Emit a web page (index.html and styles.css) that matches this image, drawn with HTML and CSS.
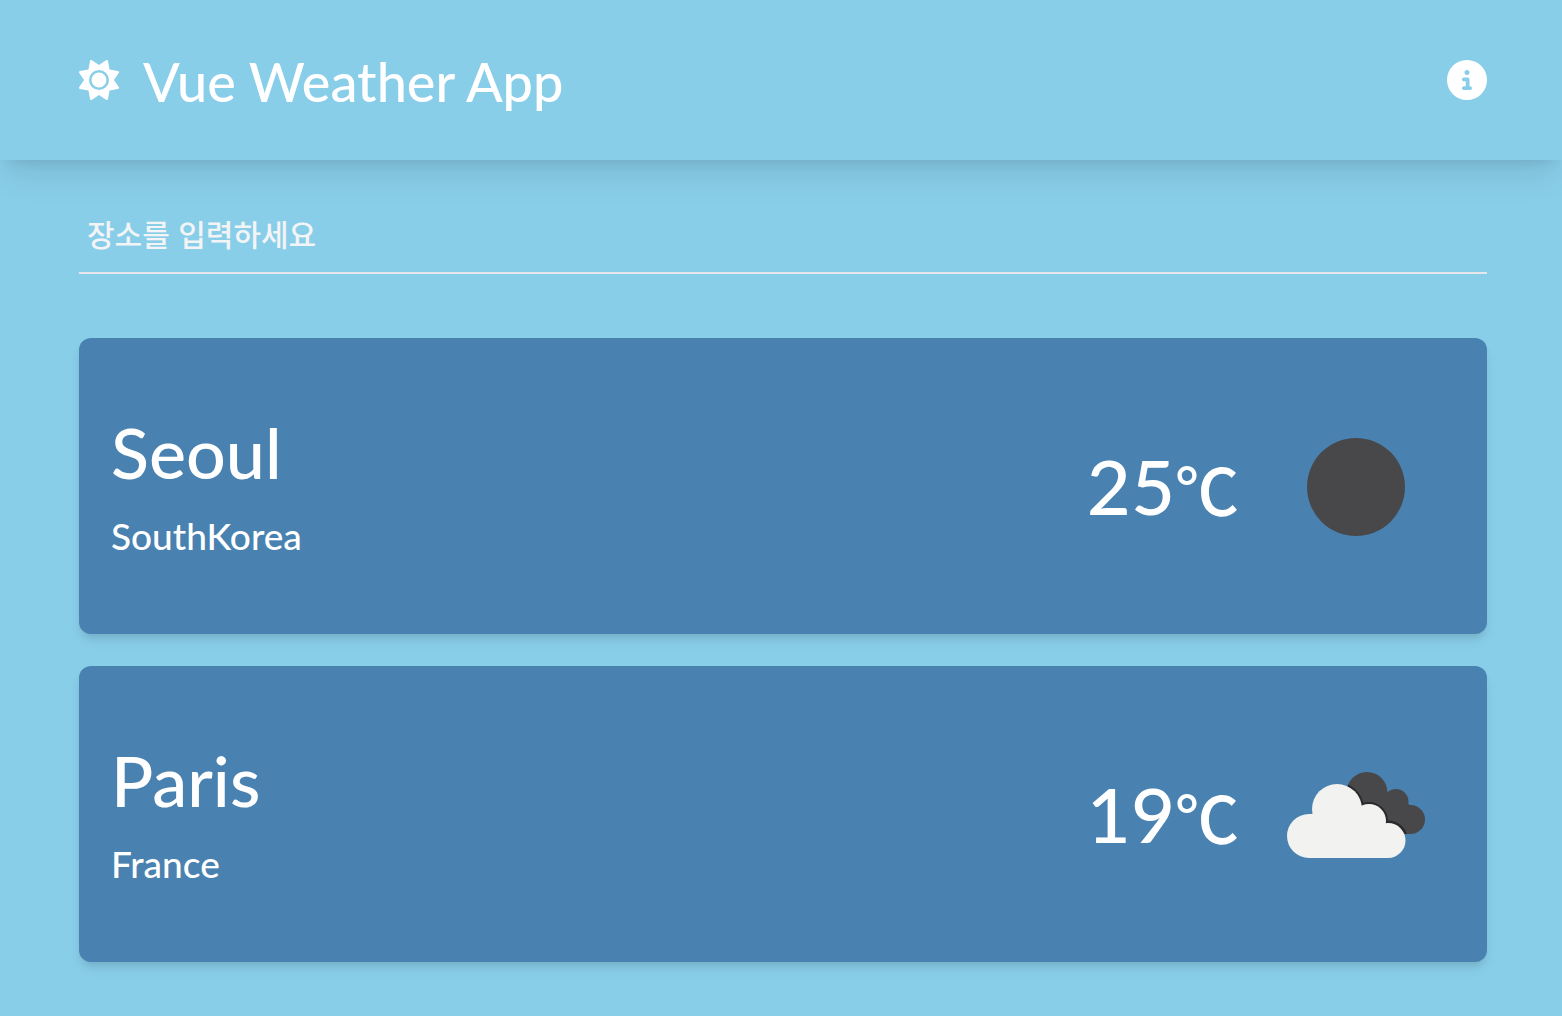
FILE: index.html
```html
<!DOCTYPE html>
<html lang="ko">
<head>
<meta charset="utf-8">
<meta name="viewport" content="width=device-width, initial-scale=1">
<title>Vue Weather App</title>
<link rel="stylesheet" href="styles.css">
</head>
<body>
<header class="header">
  <a class="brand" href="#">
    <svg class="icon" viewBox="0 0 512 512" aria-hidden="true"><path d="M361.5 1.2c5 2.1 8.6 6.6 9.6 11.9L391 121l107.9 19.8c5.3 1 9.8 4.6 11.9 9.6s1.5 10.7-1.6 15.2L446.9 256l62.3 90.3c3.1 4.5 3.7 10.2 1.6 15.2s-6.6 8.6-11.9 9.6L391 391 371.1 498.9c-1 5.3-4.6 9.8-9.6 11.9s-10.7 1.5-15.2-1.6L256 446.9l-90.3 62.3c-4.5 3.1-10.2 3.7-15.2 1.6s-8.6-6.6-9.6-11.9L121 391 13.1 371.1c-5.3-1-9.8-4.6-11.9-9.6s-1.5-10.7 1.6-15.2L65.1 256 2.8 165.7c-3.1-4.5-3.7-10.2-1.6-15.2s6.6-8.6 11.9-9.6L121 121 140.9 13.1c1-5.3 4.6-9.8 9.6-11.9s10.7-1.5 15.2 1.6L256 65.1 346.3 2.8c4.5-3.1 10.2-3.7 15.2-1.6zM160 256a96 96 0 1 1 192 0 96 96 0 1 1 -192 0zm224 0a128 128 0 1 0 -256 0 128 128 0 1 0 256 0z"/></svg>
    <span class="title">Vue Weather App</span>
  </a>
  <button class="info" type="button" aria-label="Info">
    <svg class="icon" viewBox="0 0 512 512" aria-hidden="true"><path d="M256 512A256 256 0 1 0 256 0a256 256 0 1 0 0 512zM216 336h24V272H216c-13.3 0-24-10.7-24-24s10.7-24 24-24h48c13.3 0 24 10.7 24 24v88h8c13.3 0 24 10.7 24 24s-10.7 24-24 24H216c-13.3 0-24-10.7-24-24s10.7-24 24-24zm40-208a32 32 0 1 1 0 64 32 32 0 1 1 0-64z"/></svg>
  </button>
</header>
<main class="main">
  <input class="search" type="text" placeholder="장소를 입력하세요" aria-label="장소">
  <section class="cities">
    <article class="card">
      <div class="place">
        <h2 class="city">Seoul</h2>
        <p class="country">SouthKorea</p>
      </div>
      <p class="temp">25<span class="unit">℃</span></p>
      <svg class="weather" viewBox="0 0 200 200" role="img" aria-label="Clear night"><circle class="dark" cx="101" cy="101" r="49"/></svg>
    </article>
    <article class="card">
      <div class="place">
        <h2 class="city">Paris</h2>
        <p class="country">France</p>
      </div>
      <p class="temp">19<span class="unit">℃</span></p>
      <svg class="weather" viewBox="0 0 200 200" role="img" aria-label="Broken clouds">
        <clipPath id="back-cloud">
          <circle cx="112" cy="78.5" r="20.5"/>
          <circle cx="141" cy="87.500" r="12.500"/>
          <circle cx="155.500" cy="105.500" r="14.500"/>
          <path d="M95 78H132L155 91V120H95Z"/>
        </clipPath>
        <g clip-path="url(#back-cloud)">
          <rect class="dark" width="200" height="200"/>
          <circle class="edge" cx="82" cy="95" r="25"/>
          <circle class="edge" cx="114" cy="107" r="17"/>
          <circle class="edge" cx="133" cy="126.500" r="18"/>
        </g>
        <g class="light">
          <circle cx="54" cy="122" r="22"/>
          <circle cx="82" cy="95" r="25"/>
          <circle cx="114" cy="107" r="17"/>
          <circle cx="133" cy="126.500" r="17.500"/>
          <path d="M54 144V100H114L133 118V144Z"/>
        </g>
      </svg>
    </article>
  </section>
</main>
</body>
</html>
```
FILE: styles.css
```css
*, *::before, *::after { box-sizing: border-box; }

body {
  margin: 0;
  min-height: 100vh;
  background: #89cee9;
  color: #fff;
  font-family: Lato, "Noto Sans CJK KR", sans-serif;
  font-weight: 500;
}

h2, p { margin: 0; font-weight: 500; }

.header {
  display: flex;
  align-items: center;
  justify-content: space-between;
  height: 160px;
  padding: 0 75px 0 79px;
  box-shadow: 0 20px 30px -6px rgba(0, 0, 0, 0.1), 0 8px 12px -8px rgba(0, 0, 0, 0.1);
}

.brand {
  display: flex;
  align-items: center;
  gap: 24px;
  color: inherit;
  text-decoration: none;
}

.icon { display: block; width: 40px; height: 40px; fill: currentColor; }

.title { padding-top: 4px; font-size: 54px; line-height: 80px; }

.info {
  padding: 0;
  border: 0;
  background: none;
  color: inherit;
  cursor: pointer;
}

.main { padding: 32px 75px 54px 79px; }

.search {
  display: block;
  width: 100%;
  height: 82px;
  padding: 2px 8px 0;
  border: 0;
  border-bottom: 2px solid #e5e7eb;
  outline: 0;
  background: transparent;
  color: inherit;
  font: inherit;
  font-family: "Noto Sans CJK KR", sans-serif;
  font-size: 30px;
}

.search::placeholder { color: #f3f4f6; opacity: 1; }

.cities {
  display: grid;
  gap: 32px;
  margin-top: 64px;
}

.card {
  display: flex;
  align-items: center;
  min-height: 296px;
  padding: 32px;
  border-radius: 12px;
  background: #4982b1;
  box-shadow: 0 8px 12px -2px rgba(0, 0, 0, 0.1), 0 4px 8px -4px rgba(0, 0, 0, 0.1);
}

.place {
  display: grid;
  flex: 1;
  gap: 4px;
  padding-top: 16px;
}

.city { font-size: 70px; line-height: 80px; }

.country { font-size: 37px; line-height: 80px; }

.temp { margin-right: 16px; font-size: 76px; line-height: 92px; }

.unit { font-family: "Noto Sans CJK KR", sans-serif; font-size: 64px; }

.weather { width: 200px; height: 200px; }

.dark { fill: #48484a; }
.light { fill: #f2f2f0; }
.edge { fill: none; stroke: #2a2a2e; stroke-width: 4; }
```
